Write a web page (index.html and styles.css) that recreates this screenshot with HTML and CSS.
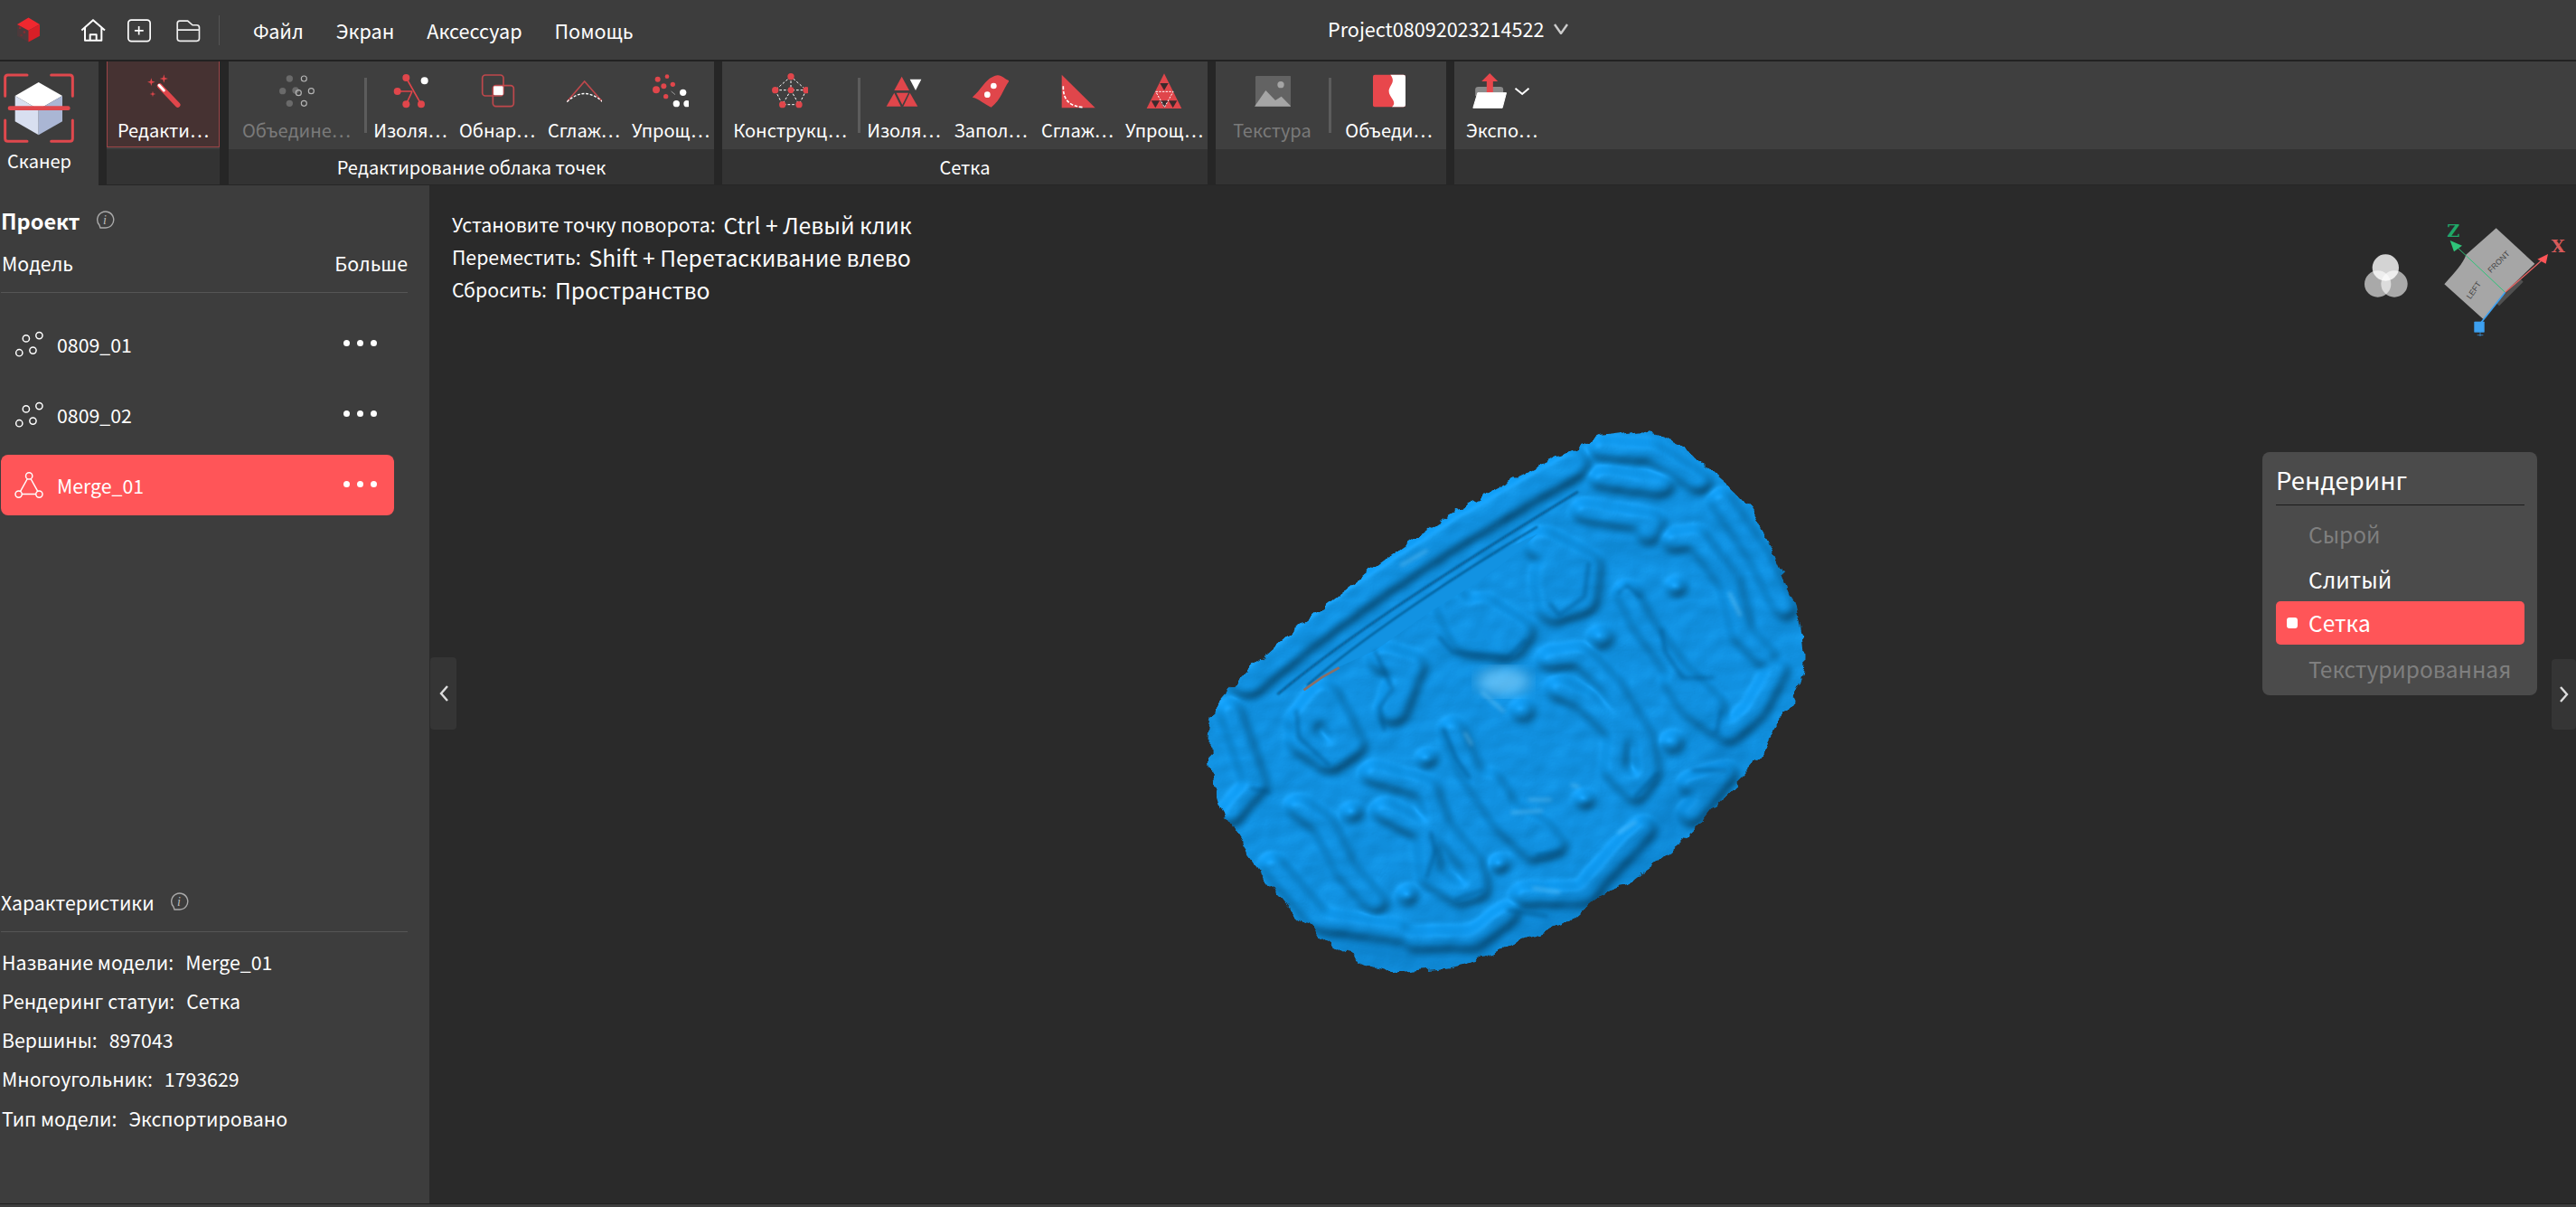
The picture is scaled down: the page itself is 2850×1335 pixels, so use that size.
FILE: index.html
```html
<!DOCTYPE html>
<html lang="ru">
<head>
    <meta charset="UTF-8">
    <title>Project08092023214522</title>
    <link rel="stylesheet" href="styles.css">
</head>
<body>
    <header class="topbar">
        <svg class="logo" viewBox="52 26 86 88">
            <polygon points="95,30 132,52 132,90 95,110 58,90 58,52" fill="#4c3a3c"/>
            <polygon points="95,30 132,52 95,72 58,52" fill="#f0282f"/>
            <polygon points="132,52 132,90 95,110 95,72" fill="#d81f27"/>
            <rect x="64" y="60" width="7" height="7" fill="#8c2b30"/>
            <rect x="78" y="74" width="7" height="7" fill="#8c2b30"/>
            <rect x="68" y="84" width="7" height="7" fill="#6c3034"/>
        </svg>
        <svg class="topicon" viewBox="262 30 90 86"><path d="M269 73 307 39 346 73M280 63V107H335V63M297 107V87H318V107" fill="none" stroke="#fff" stroke-width="6" stroke-linejoin="round"/></svg>
        <svg class="topicon plus" viewBox="424 30 86 86"><rect x="431" y="39" width="72" height="70" rx="10" fill="none" stroke="#fff" stroke-width="5"/><path d="M452 74H481M466 60V88" stroke="#fff" stroke-width="5"/></svg>
        <svg class="topicon folder" viewBox="580 30 86 86"><path d="M588 50Q588 42 596 42H622L638 56H652Q660 56 660 64V100Q660 108 652 108H596Q588 108 588 100ZM588 72H660" fill="none" stroke="#eee" stroke-width="5"/></svg>
        <div class="topsep"></div>
        <nav class="menu">
            <span>Файл</span>
            <span>Экран</span>
            <span>Аксессуар</span>
            <span>Помощь</span>
        </nav>
        <div class="project-name">
            Project08092023214522
            <svg class="project-arrow" viewBox="0 0 16 12"><path d="M1 1 8 11 15 1" fill="none" stroke="#ccc" stroke-width="2.4"/></svg>
        </div>
    </header>

    <section class="toolbar">
        <div class="scanner">
            <svg class="scanner-icon" viewBox="12 220 234 234">
                <path d="M90 226H26Q17 226 17 235V296M170 226H232Q241 226 241 235V296M17 376V437Q17 446 26 446H90M241 376V437Q241 446 232 446H170" fill="none" stroke="#e0484d" stroke-width="9" stroke-linecap="round"/>
                <polygon points="128,250 207,295 128,340 50,295" fill="#fff"/>
                <polygon points="50,295 128,340 128,425 50,380" fill="#d8dff0"/>
                <polygon points="207,295 128,340 128,425 207,380" fill="#aab6d4"/>
                <path d="M33 336H226" stroke="#e0484d" stroke-width="14" stroke-linecap="round"/>
            </svg>
            <span>Сканер</span>
        </div>

        <div class="group group-edit">
            <div class="tools">
                <div class="tool tool-edit selected">
                    <svg viewBox="481 213 120 120">
                        <path d="M528 255 588 318" stroke="#e0464b" stroke-width="17" stroke-linecap="round"/>
                        <path d="M526 253 542 270" stroke="#fff" stroke-width="9" stroke-linecap="round"/>
                        <path d="M500 229 503 239 513 242 503 245 500 255 497 245 487 242 497 239ZM542 217 545 228 556 231 545 234 542 245 539 234 528 231 539 228ZM505 272 507 280 515 282 507 284 505 292 503 284 495 282 503 280Z" fill="#e0464b"/>
                    </svg>
                    <span>Редакти…</span>
                </div>
            </div>
            <div class="group-label"></div>
        </div>

        <div class="group group-cloud">
            <div class="tools">
                <div class="tool tool-wide disabled">
                    <svg viewBox="143 35 120 120">
                        <g fill="#6a6a6a"><circle cx="180" cy="53" r="11"/><circle cx="157" cy="94" r="11"/><circle cx="200" cy="92" r="11"/><circle cx="180" cy="135" r="11"/></g>
                        <g fill="none" stroke="#b5b5b5" stroke-width="3.5"><circle cx="228" cy="53" r="9"/><circle cx="210" cy="100" r="9"/><circle cx="252" cy="94" r="9"/><circle cx="228" cy="135" r="9"/></g>
                    </svg>
                    <span>Объедине…</span>
                </div>
                <div class="tool-sep"></div>
                <div class="tool">
                    <svg viewBox="519 35 120 120">
                        <path d="M565 50 615 138M536 95H585M565 138 585 95" stroke="#e0464b" stroke-width="5"/>
                        <g fill="#e0464b"><circle cx="565" cy="50" r="12"/><circle cx="536" cy="95" r="12"/><circle cx="565" cy="138" r="12"/><circle cx="615" cy="138" r="12"/></g>
                        <circle cx="626" cy="60" r="12" fill="#fff"/>
                    </svg>
                    <span>Изоля…</span>
                </div>
                <div class="tool">
                    <svg viewBox="807 35 120 120">
                        <g fill="none" stroke="#c0484c" stroke-width="5"><rect x="818" y="41" width="70" height="69" rx="10"/><rect x="853" y="76" width="69" height="69" rx="10"/></g>
                        <rect x="855" y="78" width="32" height="30" rx="4" fill="#fff"/>
                    </svg>
                    <span>Обнар…</span>
                </div>
                <div class="tool">
                    <svg viewBox="1095 35 120 120">
                        <path d="M1100 128 1157 62 1215 128" fill="none" stroke="#c0484c" stroke-width="5"/>
                        <path d="M1099 130Q1157 75 1217 130" fill="none" stroke="#fff" stroke-width="4" stroke-dasharray="9 5"/>
                    </svg>
                    <span>Сглаж…</span>
                </div>
                <div class="tool">
                    <svg viewBox="1383 35 120 120">
                        <g fill="#e0464b"><circle cx="1400" cy="55" r="9"/><circle cx="1431" cy="46" r="7"/><circle cx="1450" cy="72" r="8"/><circle cx="1420" cy="78" r="9"/><circle cx="1395" cy="90" r="12"/><circle cx="1427" cy="112" r="8"/></g>
                        <path d="M1445 95 1458 106" stroke="#999" stroke-width="3"/>
                        <g fill="#fff"><circle cx="1484" cy="99" r="11"/><circle cx="1462" cy="136" r="11"/><circle cx="1497" cy="136" r="11"/></g>
                    </svg>
                    <span>Упрощ…</span>
                </div>
            </div>
            <div class="group-label">Редактирование облака точек</div>
        </div>

        <div class="group group-mesh">
            <div class="tools">
                <div class="tool tool-wide">
                    <svg viewBox="129 35 120 120">
                        <path d="M192 46 140 91 164 139H219L243 91ZM140 91H243M192 46V91M192 91 164 139M192 91 219 139" fill="none" stroke="#fff" stroke-width="3" stroke-dasharray="8 6"/>
                        <g fill="#e0464b"><circle cx="192" cy="46" r="11"/><circle cx="140" cy="91" r="11"/><circle cx="192" cy="91" r="10"/><circle cx="243" cy="91" r="11"/><circle cx="164" cy="139" r="11"/><circle cx="219" cy="139" r="11"/></g>
                    </svg>
                    <span>Конструкц…</span>
                </div>
                <div class="tool-sep"></div>
                <div class="tool">
                    <svg viewBox="510 35 120 120">
                        <g fill="#e0464b"><polygon points="563,46 588,92 538,92"/><polygon points="538,100 512,145 560,145"/><polygon points="590,100 568,145 616,145"/><polygon points="545,100 585,100 565,140"/></g>
                        <polygon points="590,55 628,55 609,92" fill="#fff"/>
                    </svg>
                    <span>Изоля…</span>
                </div>
                <div class="tool">
                    <svg viewBox="798 35 120 120">
                        <path d="M797 115C830 88 840 50 880 42 895 40 905 55 920 60 900 85 895 120 860 148 840 140 820 120 797 115Z" fill="#e0464b"/>
                        <circle cx="868" cy="77" r="10" fill="#fff"/><circle cx="847" cy="106" r="10" fill="#fff"/>
                    </svg>
                    <span>Запол…</span>
                </div>
                <div class="tool">
                    <svg viewBox="1084 35 120 120">
                        <polygon points="1092,40 1203,150 1092,150" fill="#e0464b"/>
                        <path d="M1097 78Q1095 145 1165 148" fill="none" stroke="#fff" stroke-width="5" stroke-dasharray="11 5"/>
                    </svg>
                    <span>Сглаж…</span>
                </div>
                <div class="tool">
                    <svg viewBox="1374 35 120 120">
                        <polygon points="1434,36 1492,152 1376,152" fill="#e0464b"/>
                        <g fill="#3a2a2c"><polygon points="1420,68 1448,68 1434,92"/><polygon points="1391,126 1419,126 1405,150"/><polygon points="1449,126 1477,126 1463,150"/><polygon points="1420,126 1448,126 1434,150"/></g>
                        <polygon points="1406,96 1464,96 1435,148" fill="none" stroke="#fff" stroke-width="3" stroke-dasharray="7 4"/>
                    </svg>
                    <span>Упрощ…</span>
                </div>
            </div>
            <div class="group-label">Сетка</div>
        </div>

        <div class="group group-texture">
            <div class="tools">
                <div class="tool tool-texture disabled">
                    <svg viewBox="81 35 120 120">
                        <rect x="84" y="44" width="118" height="101" rx="4" fill="#636363"/>
                        <path d="M81 145 118 92 150 125 170 112 202 145Z" fill="#a5a5a5"/>
                        <circle cx="168" cy="73" r="11" fill="#a5a5a5"/>
                    </svg>
                    <span>Текстура</span>
                </div>
                <div class="tool-sep"></div>
                <div class="tool tool-merge">
                    <svg viewBox="471 35 120 120">
                        <rect x="477" y="40" width="108" height="107" rx="6" fill="#e8474c"/>
                        <path d="M535 40H578Q585 40 585 47V140Q585 147 578 147H540C560 130 530 115 530 95 530 75 555 65 535 40Z" fill="#fff"/>
                    </svg>
                    <span>Объеди…</span>
                </div>
            </div>
            <div class="group-label"></div>
        </div>

        <div class="group group-export">
            <div class="tools">
                <div class="tool tool-export">
                    <svg class="export-icon" viewBox="810 35 200 120">
                        <path d="M822 90Q822 80 832 80H905Q915 80 915 90V110H822Z" fill="#8a8a8a"/>
                        <path d="M870 35 897 62H881V100H860V62H843Z" fill="#e8474c"/>
                        <path d="M830 100H925L912 150H815Z" fill="#fff" stroke="#fff" stroke-width="3" stroke-linejoin="round"/>
                        <path d="M955 85 978 104 1000 85" fill="none" stroke="#fff" stroke-width="6"/>
                    </svg>
                    <span>Экспо…</span>
                </div>
            </div>
            <div class="group-label"></div>
        </div>
    </section>

    <main class="workspace">
        <aside class="sidebar">
            <div class="project">
                <div class="panel-title">
                    <b>Проект</b>
                    <svg class="info" viewBox="0 0 22 22"><path d="M6 19H12A9 9 0 1 0 5 16Z" fill="none" stroke="#aaa" stroke-width="1.4"/><text x="11" y="15" class="info-i">i</text></svg>
                </div>
                <div class="list-head"><span>Модель</span><span>Больше</span></div>
                <div class="models">
                    <div class="model-row">
                        <svg viewBox="48 465 100 90"><g fill="none" stroke="#fff" stroke-width="4.5"><circle cx="131" cy="480" r="11"/><circle cx="87" cy="490" r="11"/><circle cx="110" cy="530" r="11"/><circle cx="64" cy="538" r="11"/></g></svg>
                        <span>0809_01</span>
                        <div class="dots"><i></i><i></i><i></i></div>
                    </div>
                    <div class="model-row">
                        <svg viewBox="48 465 100 90"><g fill="none" stroke="#fff" stroke-width="4.5"><circle cx="131" cy="480" r="11"/><circle cx="87" cy="490" r="11"/><circle cx="110" cy="530" r="11"/><circle cx="64" cy="538" r="11"/></g></svg>
                        <span>0809_02</span>
                        <div class="dots"><i></i><i></i><i></i></div>
                    </div>
                    <div class="model-row active">
                        <svg viewBox="48 465 100 90"><g fill="none" stroke="#fff" stroke-width="4.5"><circle cx="97" cy="478" r="11"/><circle cx="62" cy="539" r="11"/><circle cx="131" cy="539" r="11"/><path d="M91 488 68 529M103 488 126 529M73 539H120"/></g></svg>
                        <span>Merge_01</span>
                        <div class="dots"><i></i><i></i><i></i></div>
                    </div>
                </div>
            </div>

            <div class="props">
                <div class="props-title">
                    <span>Характеристики</span>
                    <svg class="info" viewBox="0 0 22 22"><path d="M6 19H12A9 9 0 1 0 5 16Z" fill="none" stroke="#aaa" stroke-width="1.4"/><text x="11" y="15" class="info-i">i</text></svg>
                </div>
                <div class="prop"><span>Название модели:</span><span>Merge_01</span></div>
                <div class="prop"><span>Рендеринг статуи:</span><span>Сетка</span></div>
                <div class="prop"><span>Вершины:</span><span>897043</span></div>
                <div class="prop"><span>Многоугольник:</span><span>1793629</span></div>
                <div class="prop"><span>Тип модели:</span><span>Экспортировано</span></div>
            </div>
        </aside>

        <div class="viewport">
            <div class="hints">
                <div><span>Установите точку поворота:</span><b>Ctrl + Левый клик</b></div>
                <div><span>Переместить:</span><b>Shift + Перетаскивание влево</b></div>
                <div><span>Сбросить:</span><b>Пространство</b></div>
            </div>

            <!-- scanned model: ridges are a height map for the lighting filter -->
            <svg class="scan" viewBox="0 0 1568 1568" preserveAspectRatio="none">
                <defs>
                    <mask id="scan-body" maskUnits="userSpaceOnUse" x="0" y="0" width="1568" height="1568">
                        <path filter="url(#scan-edge)" fill="#fff" d="M1090 42C1130 45 1180 70 1210 100 1240 145 1290 170 1340 240 1380 300 1420 420 1440 480 1470 560 1485 640 1470 710 1450 790 1400 840 1385 900 1350 970 1300 1000 1230 1110 1170 1170 1100 1240 1060 1275 1000 1280 960 1340 920 1375 860 1405 780 1430 720 1470 660 1500 600 1500 520 1510 430 1490 340 1420 280 1350 200 1240 140 1130 105 1060 85 1000 72 900 90 800 120 750 150 710 230 630 340 520 480 400 640 270 800 160 930 95 1000 55 1040 45 1090 42Z"/>
                    </mask>
                    <filter id="scan-edge" filterUnits="userSpaceOnUse" x="0" y="0" width="1568" height="1568">
                        <feTurbulence type="fractalNoise" baseFrequency=".03" numOctaves="2" seed="7" result="n"/>
                        <feDisplacementMap in="SourceGraphic" in2="n" scale="30" xChannelSelector="R" yChannelSelector="G"/>
                    </filter>
                    <filter id="scan-bump" filterUnits="userSpaceOnUse" x="0" y="0" width="1568" height="1568" color-interpolation-filters="sRGB">
                        <feGaussianBlur in="SourceAlpha" stdDeviation="10" result="h"/>
                        <feTurbulence type="fractalNoise" baseFrequency=".014" numOctaves="2" seed="4" result="n"/>
                        <feColorMatrix in="n" type="matrix" values="0 0 0 0 0 0 0 0 0 0 0 0 0 0 0 1 0 0 0 0" result="na"/>
                        <feComposite in="h" in2="na" operator="arithmetic" k1="0" k2=".75" k3=".3" k4="0" result="height"/>
                        <feDiffuseLighting in="height" surfaceScale="10" diffuseConstant="1" lighting-color="#fff" result="d">
                            <feDistantLight azimuth="240" elevation="60"/>
                        </feDiffuseLighting>
                        <feComposite in="d" in2="d" operator="arithmetic" k1="0" k2=".8" k3="0" k4=".17" result="l"/>
                        <feFlood flood-color="#0f9cf4" result="c"/>
                        <feBlend in="c" in2="l" mode="multiply" result="m"/>
                        <feSpecularLighting in="height" surfaceScale="10" specularConstant=".3" specularExponent="40" lighting-color="#bfe6ff" result="s">
                            <feDistantLight azimuth="240" elevation="60"/>
                        </feSpecularLighting>
                        <feComposite in="m" in2="s" operator="arithmetic" k1="0" k2="1" k3=".18" k4="0"/>
                    </filter>
                    <filter id="scan-soft"><feGaussianBlur stdDeviation="16"/></filter>
                    <filter id="scan-wide"><feGaussianBlur stdDeviation="30"/></filter>
                    <filter id="scan-thin"><feGaussianBlur stdDeviation="2"/></filter>
                    <filter id="scan-line"><feGaussianBlur stdDeviation="5"/></filter>
                </defs>
                <g mask="url(#scan-body)">
                    <g filter="url(#scan-bump)" fill="none" stroke="#fff" stroke-width="52" stroke-linecap="round" stroke-linejoin="round">
                        <path d="M170 720C350 540 600 340 930 130" stroke-width="80"/>
                        <path d="M1000 90 1120 100 1230 180"/>
                        <path d="M650 510 690 610 780 620 800 590 720 530" stroke-width="80"/>
                        <path d="M650 850 690 960 770 1100 840 1180 890 1165 860 1120 780 1070 740 990"/>
                        <path d="M880 660 950 650 1020 730 1100 880 1110 970 1080 1020 1030 960 1040 860 960 770 900 740"/>
                        <path d="M1060 480 1100 570 1170 680 1260 780 1270 840 1210 790 1170 720"/>
                        <path d="M465 970 590 1010 620 1110 700 1220 710 1285 670 1300 600 1250 590 1130 490 1070"/>
                        <path d="M290 1060 350 1110 400 1230 470 1320"/>
                        <path d="M510 800 550 680 490 660" stroke-width="70"/>
                        <path d="M300 830 350 760 410 890 360 930 300 880" stroke-width="70"/>
                        <path d="M860 350 960 410 950 500 890 520 880 430" stroke-width="80"/>
                        <path d="M960 260 1120 290 1110 320"/>
                        <path d="M1170 340 1220 330 1300 450 1330 590 1380 650"/>
                        <path d="M1300 860 1360 800 1410 690"/>
                        <path d="M1210 1000 1290 970 1210 1080"/>
                        <path d="M820 1300 960 1300 1000 1240 1100 1120"/>
                        <path d="M230 1220 340 1370 520 1400"/>
                        <path d="M560 1420 700 1420 780 1350"/>
                        <path d="M130 800 190 1000 130 1080"/>
                        <path d="M1000 170 1140 190"/>
                        <path d="M1280 230 1370 380 1430 520"/>
                        <g fill="#fff" stroke="none"><circle cx="590" cy="930" r="20"/><circle cx="815" cy="800" r="24"/><circle cx="1000" cy="600" r="24"/><circle cx="1165" cy="885" r="24"/><circle cx="960" cy="1040" r="20"/><circle cx="760" cy="1215" r="20"/><circle cx="545" cy="1300" r="20"/><circle cx="415" cy="1075" r="20"/><circle cx="1175" cy="465" r="20"/></g>
                    </g>
                    <path d="M1300 860C1260 1000 1100 1200 900 1360 700 1480 500 1500 350 1400" fill="none" stroke="#064a80" stroke-width="60" opacity=".22" filter="url(#scan-wide)"/>
                    <path d="M300 745 385 680 470 635 600 530 690 465 770 400 850 320C700 400 500 540 330 690Z" fill="#1292e2"/>
                    <g fill="none" stroke="#07598f" filter="url(#scan-thin)">
                        <path d="M240 755C400 600 640 420 945 205" stroke-width="6"/>
                        <path d="M310 730C440 600 660 430 850 300" stroke-width="5"/>
                    </g>
                    <g fill="none" stroke="#064f84" stroke-width="10" stroke-linecap="round" stroke-linejoin="round" opacity=".5" filter="url(#scan-line)">
                        <path d="M285 800 290 870 360 945"/>
                        <path d="M490 850 480 790 510 740 470 640"/>
                        <path d="M620 600 650 640 780 655 820 610"/>
                        <path d="M880 510 900 540 960 490 970 400"/>
                        <path d="M1140 580 1150 640 1190 710 1260 710"/>
                        <path d="M1040 480 1060 460 1090 490"/>
                        <path d="M1280 800 1270 855"/>
                        <path d="M630 850 660 930 690 980"/>
                        <path d="M850 1190 900 1180"/>
                        <path d="M600 1130 610 1180 590 1250"/>
                        <path d="M1215 960 1290 960"/>
                        <path d="M180 1010 220 1020"/>
                        <path d="M1130 970 1080 1030"/>
                        <path d="M660 1310 720 1285"/>
                        <path d="M780 1340 870 1355"/>
                    </g>
                    <ellipse cx="770" cy="720" rx="62" ry="38" fill="#8ad6ff" opacity=".6" filter="url(#scan-soft)"/>
                    <g fill="none" stroke="#7fd0fb" stroke-width="6" stroke-linecap="round" opacity=".55" filter="url(#scan-line)">
                        <path d="M530 405 590 365M720 750 770 800M680 860 695 890M830 1040 880 1040M790 1075 860 1070M1300 480 1325 540M1040 1130 1080 1100M840 1280 900 1290M930 1000 945 1005"/>
                    </g>
                    <path d="M302 743 345 708 385 682" fill="none" stroke="#8b6f66" stroke-width="6"/>
                </g>
            </svg>

            <svg class="gizmo" viewBox="0 0 1200 600">
                <g fill="#fff"><circle cx="568" cy="228" r="44" opacity=".8"/><circle cx="542" cy="282" r="44" opacity=".6"/><circle cx="597" cy="282" r="44" opacity=".6"/></g>
                <path d="M935 97 1063 215 965 310 893 400 763 283C800 240 825 215 835 185Z" fill="#a6a6a6"/>
                <text x="950" y="215" class="gizmo-face" transform="rotate(-45 950 215)">FRONT</text>
                <text x="868" y="308" class="gizmo-face" transform="rotate(-55 868 308)">LEFT</text>
                <path d="M1020 270 940 350" stroke="#777" stroke-width="14" opacity=".5"/>
                <path d="M965 310 805 160" stroke="#2fc47a" stroke-width="3"/>
                <polygon points="782,138 822,155 795,175" fill="#2fc47a"/>
                <text x="793" y="126" class="gizmo-z">Z</text>
                <path d="M965 310 1085 205" stroke="#e86464" stroke-width="4"/>
                <polygon points="1107,183 1100,215 1072,200" fill="#ff5558"/>
                <text x="1141" y="176" class="gizmo-x">X</text>
                <path d="M965 310 885 410" stroke="#3da0f0" stroke-width="5"/>
                <path d="M863 408H895V442H863ZM872 452H892M882 442V456" fill="#3da0f0" stroke="#3da0f0" stroke-width="2"/>
            </svg>

            <div class="rendering">
                <div class="rendering-title">Рендеринг</div>
                <div class="rendering-list">
                    <div class="mode muted">Сырой</div>
                    <div class="mode">Слитый</div>
                    <div class="mode current">Сетка</div>
                    <div class="mode muted">Текстурированная</div>
                </div>
            </div>

            <div class="toggle toggle-left"><svg viewBox="0 0 12 20"><path d="M10 2 3 10 10 18" fill="none" stroke="#ddd" stroke-width="2.4"/></svg></div>
            <div class="toggle toggle-right"><svg viewBox="0 0 12 20"><path d="M2 2 9 10 2 18" fill="none" stroke="#ddd" stroke-width="2.4"/></svg></div>
        </div>
    </main>
    <div class="bottomline"></div>
</body>
</html>
```

FILE: styles.css
```css
*{
    box-sizing: border-box;
}
html, body{
    margin: 0;
    height: 100%;
}
body{
    width: 2850px;
    height: 1335px;
    overflow: hidden;
    display: flex;
    flex-direction: column;
    background-color: #3d3d3d;
    color: #fff;
    font-family: "Noto Sans CJK SC", "Noto Sans", sans-serif;
    font-size: 21.3px;
}

/* top bar */
.topbar{
    height: 68px;
    flex: none;
    display: flex;
    align-items: center;
    background-color: #3d3d3d;
    border-bottom: 2px solid #222;
    position: relative;
    font-size: 21.6px;
}
.logo{
    width: 29px;
    height: 30px;
    margin-left: 17px;
}
.topicon{
    width: 30px;
    height: 29px;
    margin-left: 42px;
}
.topicon.plus{
    margin-left: 21px;
}
.topicon.folder{
    margin-left: 24px;
}
.topsep{
    width: 1px;
    height: 33px;
    margin-left: 19px;
    background-color: #555;
}
.menu{
    display: flex;
    gap: 36px;
    margin-left: 37px;
}
.project-name{
    position: absolute;
    left: 1469px;
    top: 16px;
    display: flex;
    align-items: center;
    gap: 10px;
}
.project-arrow{
    width: 16px;
    height: 12px;
}

/* ribbon */
.toolbar{
    height: 137px;
    flex: none;
    display: flex;
    background-color: #262626;
    font-size: 20px;
}
.scanner{
    width: 109px;
    background-color: #3d3d3d;
    display: flex;
    flex-direction: column;
    padding: 13px 0 0 4px;
}
.scanner-icon{
    width: 78px;
    height: 78px;
}
.scanner span{
    line-height: 30px;
    margin-top: 4px;
    padding-left: 4px;
}
.group{
    display: flex;
    flex-direction: column;
    margin-left: 9px;
}
.group-edit{
    width: 125px;
}
.group-cloud{
    width: 537px;
    margin-left: 10px;
}
.group-mesh{
    width: 537px;
}
.group-texture{
    width: 255px;
}
.group-export{
    flex: 1;
}
.tools{
    height: 97px;
    display: flex;
    background-color: #3f3f3f;
}
.group-label{
    height: 39px;
    margin-bottom: 1px;
    background-color: #333;
    text-align: center;
    line-height: 40px;
}
.tool{
    width: 96px;
    height: 95px;
    flex: none;
    display: flex;
    flex-direction: column;
    align-items: center;
    padding-top: 13px;
    white-space: nowrap;
}
.tool svg{
    width: 40px;
    height: 40px;
    flex: none;
}
.tool span{
    line-height: 30px;
    margin-top: 8px;
}
.tool-wide{
    width: 150px;
}
.tool-edit{
    width: 125px;
}
.tool-texture{
    width: 125px;
}
.tool-merge{
    width: 127px;
}
.tool-export{
    width: 105px;
}
.tool .export-icon{
    width: 67px;
}
.selected{
    background-color: #463232;
    border: 1px solid #9c4548;
    border-top: none;
}
.disabled span{
    color: #7a7a7a;
}
.tool-sep{
    width: 3px;
    height: 61px;
    margin-top: 18px;
    flex: none;
    background-color: #5c5c5c;
}

/* main area */
.workspace{
    flex: 1;
    display: flex;
    min-height: 0;
}
.sidebar{
    width: 475px;
    flex: none;
    display: flex;
    flex-direction: column;
    justify-content: space-between;
    padding: 24px 24px 73px 1px;
    background-color: #3d3d3d;
}
.panel-title{
    height: 30px;
    line-height: 30px;
    font-size: 23.5px;
    display: flex;
    align-items: center;
    gap: 16px;
}
.info{
    width: 22px;
    height: 22px;
}
.info-i{
    font-family: "Liberation Serif", serif;
    font-style: italic;
    font-size: 14px;
    fill: #bbb;
    text-anchor: middle;
}
.list-head{
    display: flex;
    justify-content: space-between;
    line-height: 30px;
    margin-top: 17px;
    padding: 0 0 17px 1px;
    border-bottom: 1px solid #555;
}
.models{
    display: flex;
    flex-direction: column;
    gap: 11px;
    margin-top: 23px;
    width: 435px;
}
.model-row{
    height: 67px;
    display: flex;
    align-items: center;
    padding-left: 15px;
    border-radius: 8px;
}
.model-row svg{
    width: 33px;
    height: 30px;
    margin-right: 14px;
}
.model-row span{
    margin-bottom: 1px;
}
.model-row.active{
    background-color: #ff5558;
}
.dots{
    display: flex;
    gap: 8px;
    margin-left: auto;
    margin-right: 19px;
    margin-top: -2px;
}
.dots i{
    width: 7px;
    height: 7px;
    border-radius: 50%;
    background-color: #fff;
}
.props-title{
    display: flex;
    align-items: center;
    gap: 16px;
    line-height: 30px;
    padding-bottom: 17px;
    border-bottom: 1px solid #555;
}
.prop{
    height: 43.3px;
    line-height: 43px;
    display: flex;
    gap: 13px;
    padding-left: 1px;
}
.props-title + .prop{
    margin-top: 11px;
}

/* 3d view */
.viewport{
    flex: 1;
    position: relative;
    background-color: #2a2a2a;
    padding: 25px 0 0 25px;
}
.hints div{
    height: 36px;
    line-height: 36px;
    display: flex;
    gap: 9px;
}
.hints span{
    font-size: 21.3px;
}
.hints b{
    font-weight: 400;
    font-size: 24.7px;
}
.scan{
    position: absolute;
    left: 825px;
    top: 255px;
    width: 740px;
    height: 640px;
}
.gizmo{
    position: absolute;
    left: 1975px;
    top: 15px;
    width: 400px;
    height: 200px;
}
.gizmo-face{
    font-family: "Liberation Sans", sans-serif;
    font-size: 26px;
    fill: #444;
    text-anchor: middle;
}
.gizmo-z, .gizmo-x{
    font-family: "DejaVu Serif", serif;
    font-weight: bold;
    font-size: 58px;
    text-anchor: middle;
}
.gizmo-z{
    fill: #1fa868;
}
.gizmo-x{
    fill: #d85a5a;
}
.rendering{
    position: absolute;
    top: 295px;
    right: 43px;
    width: 304px;
    height: 269px;
    padding: 0 14px 0 15px;
    border-radius: 8px;
    background-color: #4b4b4b;
}
.rendering-title{
    height: 59px;
    padding-top: 10px;
    line-height: 40px;
    font-size: 27.5px;
    border-bottom: 1px solid #1c1c1c;
}
.rendering-list{
    display: flex;
    flex-direction: column;
    gap: 2px;
    margin-top: 8px;
}
.mode{
    height: 48px;
    line-height: 48px;
    padding-left: 36px;
    font-size: 24.5px;
    border-radius: 5px;
    position: relative;
}
.muted{
    color: #7f7f7f;
}
.current{
    background-color: #ff5558;
    margin: -2px 0 1px;
}
.current::before{
    content: "";
    position: absolute;
    left: 12px;
    top: 18px;
    width: 12px;
    height: 12px;
    border-radius: 3px;
    background-color: #fff;
}
.toggle{
    position: absolute;
    width: 29px;
    height: 80px;
    display: flex;
    align-items: center;
    justify-content: center;
    border-radius: 4px;
    background-color: #353535;
}
.toggle svg{
    width: 12px;
    height: 20px;
}
.toggle-left{
    left: 1px;
    top: 522px;
}
.toggle-right{
    right: 0;
    top: 524px;
    width: 27px;
    height: 78px;
}
.bottomline{
    height: 4px;
    flex: none;
    border-top: 1px solid #1f1f1f;
    background-color: #3d3d3d;
}
```
